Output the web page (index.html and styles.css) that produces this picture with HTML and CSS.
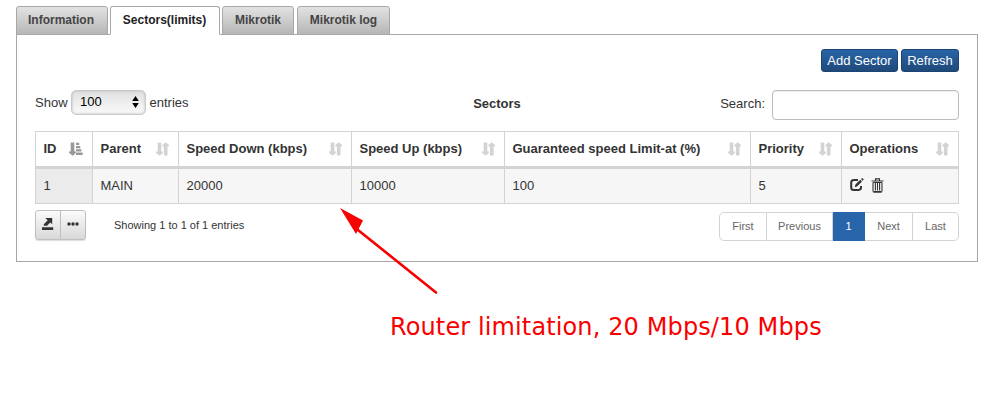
FILE: index.html
```html
<!DOCTYPE html>
<html lang="en">
<head>
<meta charset="utf-8">
<title>Sectors</title>
<link rel="stylesheet" href="styles.css">
</head>
<body>
<svg class="defs" width="0" height="0" aria-hidden="true">
  <symbol id="sort" viewBox="0 0 13 14"><path d="M1.7 0.5h3.6v9h1.5v1.4L3.7 13.7L0.1 10.9V9.5h1.6zM7.9 13.5h3.6V4.5h1.5V3.1L9.7 0.2L6.4 3.1v1.4h1.5z"/></symbol>
  <symbol id="sort-asc" viewBox="0 0 14 14"><path d="M1.7 0.5h3.6v9h1.5v1.4L3.7 13.7L0.1 10.9V9.5h1.6zM7 .7h3.2v2.3H7zM7 4h4.3v2.3H7zM7 7.3h5.4v2.3H7zM7 10.6h6.7v2.4H7z"/></symbol>
</svg>
<nav class="tabs">
  <a class="tab t1">Information</a>
  <a class="tab t2 active">Sectors(limits)</a>
  <a class="tab t3">Mikrotik</a>
  <a class="tab t4">Mikrotik log</a>
</nav>
<main class="panel">
  <div class="actions">
    <button class="btn add">Add Sector</button>
    <button class="btn refresh">Refresh</button>
  </div>
  <div class="controls">
    <label class="length">Show
      <span class="select">100<svg width="7" height="12" viewBox="0 0 7 12"><path d="M3.5 0L6.8 5H.2zM3.5 12L.2 7h6.6z"/></svg></span>
      entries</label>
    <strong class="title">Sectors</strong>
    <label class="search"><span>Search:</span><input type="text"></label>
  </div>
  <table class="grid">
    <colgroup><col class="c1"><col class="c2"><col class="c3"><col class="c4"><col class="c5"><col class="c6"><col class="c7"></colgroup>
    <thead>
      <tr>
        <th><div class="head">ID<svg class="sorted" width="14" height="14"><use href="#sort-asc"/></svg></div></th>
        <th><div class="head">Parent<svg width="13" height="14"><use href="#sort"/></svg></div></th>
        <th><div class="head">Speed Down (kbps)<svg width="13" height="14"><use href="#sort"/></svg></div></th>
        <th><div class="head">Speed Up (kbps)<svg width="13" height="14"><use href="#sort"/></svg></div></th>
        <th><div class="head">Guaranteed speed Limit-at (%)<svg width="13" height="14"><use href="#sort"/></svg></div></th>
        <th><div class="head">Priority<svg width="13" height="14"><use href="#sort"/></svg></div></th>
        <th><div class="head">Operations<svg width="13" height="14"><use href="#sort"/></svg></div></th>
      </tr>
    </thead>
    <tbody>
      <tr>
        <td class="key">1</td><td>MAIN</td><td>20000</td><td>10000</td><td>100</td><td>5</td>
        <td><div class="ops">
          <svg width="14" height="14" viewBox="0 0 14 14"><path d="M8 2H3.8Q1.2 2 1.2 4.6v4.8Q1.2 11.9 3.8 11.9h4.8Q11 11.9 11 9.6V8" fill="none" stroke="#333" stroke-width="2"/><path d="M4.8 9.2L5.4 6.4L10.3 1.7L12 3.4L7.3 8.3ZM11 1L12.2 0L13.8 1.6L12.7 2.7Z" fill="#333"/></svg>
          <svg width="13" height="15" viewBox="0 0 13 15"><path d="M4.5 2.5V.9h4v1.6M.5 3h12M2 4.5v8.3q0 1.4 1.2 1.4h6.6q1.2 0 1.2-1.4V4.5M4.4 5v7.5M6.5 5v7.5M8.6 5v7.5M2 4.5h9M3 13.5h7" fill="none" stroke="#333" stroke-width="1.1"/></svg>
        </div></td>
      </tr>
    </tbody>
  </table>
  <div class="footer">
    <div class="tools">
      <button aria-label="Export"><svg width="12" height="14" viewBox="0 0 12 14"><path d="M0 10.2h11.2v2.8H0zM3.2 1h7v6.3L8.2 5.4L5 8.8H1.8V7.2L5.7 3.3z"/></svg></button>
      <button aria-label="More"><svg width="12" height="4" viewBox="0 0 12 4"><circle cx="2" cy="2" r="1.7"/><circle cx="6" cy="2" r="1.7"/><circle cx="10" cy="2" r="1.7"/></svg></button>
    </div>
    <span class="info">Showing 1 to 1 of 1 entries</span>
    <div class="pager">
      <a class="p1">First</a><a class="p2">Previous</a><a class="p3 current">1</a><a class="p4">Next</a><a class="p5">Last</a>
    </div>
  </div>
</main>
<svg class="arrow" width="100" height="88" viewBox="0 0 100 88"><path d="M18 23L96 85.5" stroke="#f80000" stroke-width="2.6" stroke-linecap="round"/><path d="M0 1L23 13.5L16 27Z" fill="#f80000"/></svg>
<p class="note">Router limitation, 20 Mbps/10 Mbps</p>
</body>
</html>
```
FILE: styles.css
```css
* { box-sizing: border-box; }
body {
  margin: 0;
  padding: 6px 18px 0 16px;
  background: #fff;
  color: #333;
  font: 13px/18px "Liberation Sans", Arial, sans-serif;
}
.defs { position: absolute; }
.tabs { display: flex; height: 29px; }
.tab {
  height: 29px;
  border: 1px solid #a8a8a8;
  border-radius: 3px 3px 0 0;
  background: linear-gradient(#e2e2e2, #b6b6b6);
  color: #444;
  font-weight: bold;
  font-size: 12px;
  line-height: 26px;
  text-align: center;
}
.t1 { width: 92px; margin-right: 2px; padding-right: 2px; }
.t2 { width: 110px; margin-right: 2px; padding-right: 1px; }
.t3 { width: 72px; margin-right: 3px; }
.t4 { width: 93px; }
.tab.active { position: relative; background: #fff; border-bottom-color: #fff; color: #222; z-index: 1; }
.panel {
  height: 228px;
  margin-top: -1px;
  padding: 14px 18px 0;
  border: 1px solid #a6a6a6;
}
.actions { display: flex; justify-content: flex-end; gap: 3px; height: 23px; }
.btn {
  height: 23px;
  padding: 0;
  border: 1px solid #1b4373;
  border-radius: 3px;
  background: linear-gradient(#2864a7, #20497a);
  color: #fff;
  font: 13px/20px "Liberation Sans", Arial, sans-serif;
}
.add { width: 77px; }
.refresh { width: 58px; }
.controls { display: grid; grid-template-columns: 1fr auto 1fr; height: 41px; margin-top: 18px; }
.length { display: flex; gap: 3.5px; height: 25px; align-items: center; line-height: 22px; }
.select {
  display: flex;
  justify-content: space-between;
  align-items: center;
  width: 75px;
  height: 25px;
  padding: 0 6px 1px 8px;
  border: 1px solid #c9c9c9;
  border-radius: 5px;
  background: linear-gradient(#e1e1e1, #fafafa);
  box-shadow: inset 0 0 3px #bbb;
  color: #000;
}
.title { padding-top: 5px; }
.search { display: flex; justify-content: flex-end; gap: 7px; height: 30px; line-height: 27px; }
.search input { width: 187px; height: 30px; border: 1px solid #bbb; border-radius: 4px; background: #fff; box-shadow: inset 0 1px 1px #eee; }
.grid {
  width: 924px;
  table-layout: fixed;
  border-collapse: separate;
  border-spacing: 0;
  border: solid #d3d3d3;
  border-width: 1px 0 0 1px;
}
.c1 { width: 57px; }
.c2 { width: 86px; }
.c3 { width: 173px; }
.c4 { width: 153px; }
.c5 { width: 246px; }
.c6 { width: 91px; }
.c7 { width: 117px; }
th, td { padding: 0 9px 0 7.5px; border-right: 1px solid #d3d3d3; text-align: left; }
th { height: 37px; border-bottom: 3px solid #d3d3d3; }
td { height: 35px; border-bottom: 1px solid #d3d3d3; background: #f6f6f6; }
.key { background: #ebebeb; }
.head { display: flex; justify-content: space-between; align-items: center; white-space: nowrap; }
.head svg { flex: none; fill: #d3d3d3; }
.head .sorted { fill: #999; }
.ops { display: flex; gap: 7px; align-items: center; margin-top: -2px; }
.footer { display: flex; margin-top: 6px; align-items: flex-start; }
.tools { display: flex; }
.tools button {
  display: flex;
  align-items: center;
  justify-content: center;
  width: 26px;
  height: 30px;
  padding: 0 0 3px;
  border: 1px solid #bfbfbf;
  border-radius: 3px 0 0 3px;
  background: linear-gradient(#fbfbfb, #d8d8d8);
  box-shadow: 0 1px 1px #ddd;
  fill: #333;
}
.tools button + button { margin-left: -1px; border-radius: 0 3px 3px 0; }
.info { margin-left: 28px; font-size: 11px; line-height: 30px; }
.pager { display: flex; margin: 2px 0 0 auto; font-size: 11px; line-height: 27px; text-align: center; }
.pager a { height: 29px; border: solid #d3d3d3; border-width: 1px 1px 1px 0; color: #666; }
.pager .p1 { width: 48px; border-left-width: 1px; border-radius: 5px 0 0 5px; }
.p2 { width: 66px; }
.pager .p3 { width: 32px; }
.p4 { width: 48px; }
.p5 { width: 46px; }
.pager .p5 { border-radius: 0 5px 5px 0; }
.pager .current { background: #2864a9; border-color: #2864a9; color: #fff; }
.arrow { position: absolute; left: 340px; top: 207px; }
.note {
  margin: 49px 0 0 374px;
  color: #f80000;
  font: 24px/32px "DejaVu Sans", Verdana, sans-serif;
  letter-spacing: 0.12px;
  white-space: nowrap;
}
```
